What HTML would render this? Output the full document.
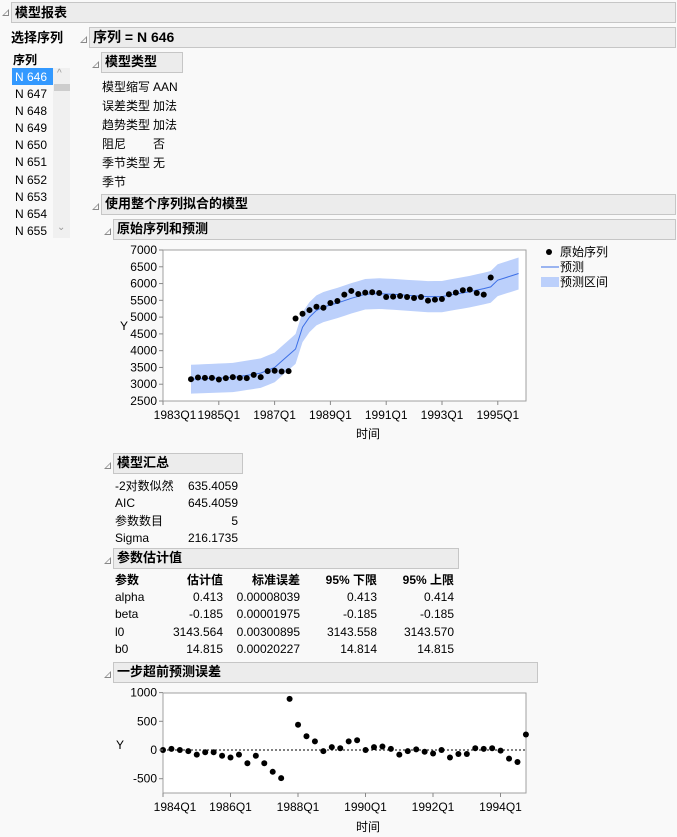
<!DOCTYPE html>
<html><head><meta charset="utf-8">
<style>
body{margin:0;width:677px;height:837px;background:#f9f9f9;font-family:"Liberation Sans","Noto Sans CJK SC",sans-serif;font-size:12px;color:#000;position:relative;overflow:hidden}
.a{position:absolute;white-space:nowrap}
.h{position:absolute;background:#ececec;border:1px solid #c6c6c6;box-sizing:border-box;font-weight:bold;font-size:13px;padding-left:3px;line-height:18px}
.t{position:absolute;width:0;height:0;border-left:7px solid transparent;border-bottom:7px solid #888}
.t:after{content:"";position:absolute;left:-5px;top:2px;border-left:4px solid transparent;border-bottom:4px solid #f9f9f9}
.r{text-align:right}
</style></head><body>
<div class="t" style="left:2px;top:9px"></div>
<div class="h" style="left:11px;top:2px;width:665px;height:21px;line-height:19px">模型报表</div>
<div class="a" style="left:11px;top:27px;font-weight:bold;font-size:13px">选择序列</div>
<div class="a" style="left:13px;top:51px;font-weight:bold">序列</div>
<div class="a" style="left:12px;top:68px;width:41px;height:17px;background:#3399ff"></div>
<div class="a" style="left:53px;top:68px;width:17px;height:170px;background:#f0f0f0"></div>
<div class="a" style="left:54px;top:84px;width:16px;height:7px;background:#cdcdcd"></div>
<div class="a" style="left:57px;top:68px;color:#999;font-size:10px">^</div>
<div class="a" style="left:57px;top:222px;color:#999;font-size:10px">⌄</div>
<div class="a" style="left:15px;top:69px;line-height:17.1px;font-size:12px">
<span style="color:#fff">N 646</span><br>N 647<br>N 648<br>N 649<br>N 650<br>N 651<br>N 652<br>N 653<br>N 654<br>N 655</div>

<div class="t" style="left:80px;top:36px"></div>
<div class="h" style="left:89px;top:27px;width:587px;height:21px;font-size:14px;line-height:19px">序列 = N 646</div>
<div class="t" style="left:92px;top:61px"></div>
<div class="h" style="left:101px;top:52px;width:82px;height:21px">模型类型</div>
<div class="a" style="left:102px;top:78px;line-height:19px">模型缩写<br>误差类型<br>趋势类型<br>阻尼<br>季节类型<br>季节</div>
<div class="a" style="left:153px;top:78px;line-height:19px">AAN<br>加法<br>加法<br>否<br>无</div>
<div class="t" style="left:92px;top:203px"></div>
<div class="h" style="left:101px;top:194px;width:575px;height:21px">使用整个序列拟合的模型</div>
<div class="t" style="left:104px;top:228px"></div>
<div class="h" style="left:113px;top:219px;width:563px;height:21px">原始序列和预测</div>
<svg class="a" style="left:100px;top:241px" width="577" height="205" id="c1"></svg>

<div class="t" style="left:104px;top:462px"></div>
<div class="h" style="left:113px;top:453px;width:130px;height:21px">模型汇总</div>
<div class="a" style="left:115px;top:478px;line-height:17.3px">-2对数似然<br>AIC<br>参数数目<br>Sigma</div>
<div class="a r" style="left:170px;width:68px;top:478px;line-height:17.3px">635.4059<br>645.4059<br>5<br>216.1735</div>
<div class="t" style="left:104px;top:557px"></div>
<div class="h" style="left:113px;top:548px;width:346px;height:21px">参数估计值</div>
<div class="a" style="left:115px;top:572px;line-height:17.2px"><b>参数</b><br>alpha<br>beta<br>l0<br>b0</div>
<div class="a r" style="left:150px;width:73px;top:572px;line-height:17.2px"><b>估计值</b><br>0.413<br>-0.185<br>3143.564<br>14.815</div>
<div class="a r" style="left:225px;width:75px;top:572px;line-height:17.2px"><b>标准误差</b><br>0.00008039<br>0.00001975<br>0.00300895<br>0.00020227</div>
<div class="a r" style="left:300px;width:77px;top:572px;line-height:17.2px"><b>95% 下限</b><br>0.413<br>-0.185<br>3143.558<br>14.814</div>
<div class="a r" style="left:377px;width:77px;top:572px;line-height:17.2px"><b>95% 上限</b><br>0.414<br>-0.185<br>3143.570<br>14.815</div>
<div class="t" style="left:104px;top:671px"></div>
<div class="h" style="left:113px;top:662px;width:425px;height:21px">一步超前预测误差</div>
<svg class="a" style="left:100px;top:685px" width="577" height="152" id="c2"></svg>

<script>
var NS="http://www.w3.org/2000/svg";
function el(s,t,a,txt){var e=document.createElementNS(NS,t);for(var k in a)e.setAttribute(k,a[k]);if(txt!=null)e.textContent=txt;s.appendChild(e);return e;}
var s=document.getElementById("c1");
var L=63,R=426,T=9,B=160;
function Y1(v){return B-(v-2500)/4500*(B-T);}
function X1(i){return 91+i*6.97;}
el(s,"rect",{x:L,y:T,width:R-L,height:B-T,fill:"#fff",stroke:"#a0a0a0"});
var pred={0:3150,6:3200,10:3330,12:3500,15:4050,16:4700,17:5000,18:5200,19:5300,21:5420,23:5560,25:5680,27:5700,29:5680,31:5650,34:5610,36:5610,37:5650,40:5760,42:5850,43:5900,44:6100,47:6300};
var ks=Object.keys(pred).map(Number);
function P(i){for(var j=0;j<ks.length-1;j++){if(i>=ks[j]&&i<=ks[j+1]){var a=ks[j],b=ks[j+1];return pred[a]+(pred[b]-pred[a])*(i-a)/(b-a);}}return pred[47];}
var up="",dn="",ln="";
for(var i=0;i<=47;i++){var w=430+i*1;up+=(i?"L":"M")+X1(i)+","+Y1(P(i)+w);ln+=(i?"L":"M")+X1(i)+","+Y1(P(i));}
for(var i=47;i>=0;i--){var w=430+i*1;dn+="L"+X1(i)+","+Y1(P(i)-w);}
el(s,"path",{d:up+dn+"Z",fill:"#bcd0fb"});
el(s,"path",{d:ln,fill:"none",stroke:"#3c6fe6","stroke-width":1});
var d1=[3150,3200,3190,3190,3140,3180,3210,3190,3180,3280,3210,3390,3400,3380,3390,4960,5100,5210,5310,5280,5420,5480,5670,5780,5690,5730,5740,5720,5600,5610,5630,5600,5570,5600,5490,5520,5540,5680,5730,5800,5820,5720,5670,6180];
d1.forEach(function(v,i){el(s,"circle",{cx:X1(i),cy:Y1(v),r:3,fill:"#000"});});
for(var v=2500;v<=7000;v+=500){var y=Y1(v);el(s,"line",{x1:L-4,x2:L,y1:y,y2:y,stroke:"#888"});el(s,"text",{x:L-6,y:y+4,"text-anchor":"end","font-size":"12"},v);}
["1983Q1","1985Q1","1987Q1","1989Q1","1991Q1","1993Q1","1995Q1"].forEach(function(t,k){var x=L+k*55.8;el(s,"line",{x1:x,x2:x,y1:B,y2:B+4,stroke:"#888"});el(s,"text",{x:x+(k==0?12:0),y:B+18,"text-anchor":"middle","font-size":"12"},t);});
el(s,"text",{x:20,y:89,"font-size":"12"},"Y");
el(s,"text",{x:268,y:197,"text-anchor":"middle","font-size":"12"},"时间");
el(s,"circle",{cx:449,cy:11,r:3,fill:"#000"});
el(s,"text",{x:460,y:15,"font-size":"12"},"原始序列");
el(s,"line",{x1:441,x2:459,y1:26,y2:26,stroke:"#3c6fe6"});
el(s,"text",{x:460,y:30,"font-size":"12"},"预测");
el(s,"rect",{x:441,y:36,width:18,height:10,fill:"#bcd0fb"});
el(s,"text",{x:460,y:45,"font-size":"12"},"预测区间");
var s2=document.getElementById("c2");
var L2=63,R2=426,T2=8,B2=108;
function Y2(v){return 65-v/500*28.7;}
function X2(i){return 63+i*8.44;}
el(s2,"rect",{x:L2,y:T2,width:R2-L2,height:B2-T2,fill:"#fff",stroke:"#a0a0a0"});
el(s2,"line",{x1:L2,x2:R2,y1:65,y2:65,stroke:"#000","stroke-dasharray":"2,2"});
var d2=[0,20,0,-20,-80,-40,-40,-100,-130,-80,-230,-100,-230,-380,-490,890,440,240,150,-20,50,30,150,170,0,50,60,20,-80,-20,10,-30,-60,0,-130,-70,-70,30,20,30,-10,-150,-210,270];
d2.forEach(function(v,i){el(s2,"circle",{cx:X2(i),cy:Y2(v),r:3,fill:"#000"});});
[1000,500,0,-500].forEach(function(v){var y=Y2(v);el(s2,"line",{x1:L2-4,x2:L2,y1:y,y2:y,stroke:"#888"});el(s2,"text",{x:L2-6,y:y+4,"text-anchor":"end","font-size":"12"},v);});
["1984Q1","1986Q1","1988Q1","1990Q1","1992Q1","1994Q1"].forEach(function(t,k){var x=L2+k*67.5;el(s2,"line",{x1:x,x2:x,y1:B2,y2:B2+4,stroke:"#888"});el(s2,"text",{x:k==0?x+12:x,y:B2+18,"text-anchor":"middle","font-size":"12"},t);});
el(s2,"text",{x:16,y:64,"font-size":"12"},"Y");
el(s2,"text",{x:268,y:146,"text-anchor":"middle","font-size":"12"},"时间");
</script>
</body></html>
